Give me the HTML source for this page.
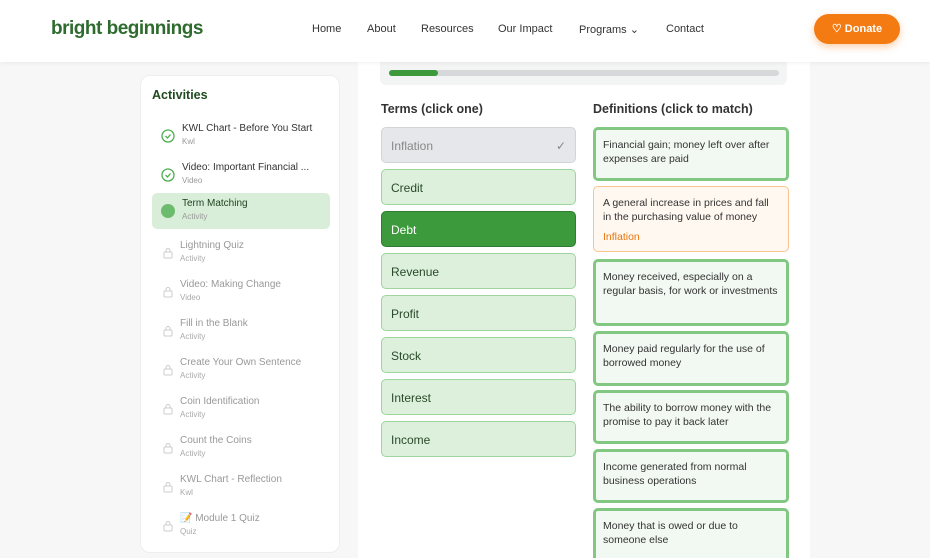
<!DOCTYPE html>
<html style="width:930px;height:558px;overflow:hidden"><head><style>
*{box-sizing:border-box;margin:0;padding:0}
body{width:930px;height:558px;overflow:hidden;background:#f6f7f6;font-family:"Liberation Sans",sans-serif;position:relative}
.hdr{position:absolute;left:0;top:0;width:930px;height:62px;background:#fff;box-shadow:0 1px 4px rgba(0,0,0,.06);z-index:5}
.logo{position:absolute;left:51px;top:18px;font-size:19px;font-weight:bold;color:#2f6b2f;letter-spacing:-.5px}
.nav{position:absolute;top:23px;font-size:11px;color:#333}
.don{position:absolute;left:814px;top:14px;width:86px;height:30px;border-radius:15px;background:#f47a12;color:#fff;font-size:11px;font-weight:bold;line-height:30px;text-align:center;box-shadow:0 3px 8px rgba(244,122,18,.35)}
.side{position:absolute;left:140px;top:75px;width:200px;height:478px;background:#fff;border-radius:10px;border:1px solid #eee}
.side h3{position:absolute;left:11px;top:12px;font-size:12.5px;color:#1f4a1f}
.it{position:absolute;left:11px;width:178px;height:36px;border-radius:5px}
.it .t{position:absolute;left:30px;top:5px;font-size:10px;color:#333;white-space:nowrap}
.it .s{position:absolute;left:30px;top:19px;font-size:8px;color:#999}
.it.l .t{left:28px;color:#999}.it.l .s{left:28px;color:#aaa}
.ic{position:absolute;left:9px;top:11px;width:14px;height:14px}
.main{position:absolute;left:358px;top:62px;width:452px;height:496px;background:#fff}
.prog{position:absolute;left:380px;top:55px;width:407px;height:30px;background:#f3f4f4;border-radius:6px;z-index:1}
.bar{position:absolute;left:9px;top:15px;width:390px;height:6px;border-radius:3px;background:#d6d8da}
.bar i{position:absolute;left:0;top:0;width:49px;height:6px;border-radius:3px;background:#3c9a3c}
.lbl{position:absolute;top:102px;font-size:12.5px;font-weight:bold;color:#333}
.term{position:absolute;left:381px;width:195px;height:36px;border-radius:5px;background:#dcf0dc;border:1.5px solid #9fd49f;font-size:12px;color:#2a4a2a;padding:11px 9px}
.def{position:absolute;left:593px;width:196px;border-radius:5px;background:#f2f9f2;border:3px solid #82c882;font-size:10.5px;line-height:14px;color:#333;padding:8px 7px}
</style></head><body>
<div class="hdr">
<div class="logo">bright beginnings</div>
<div class="nav" style="left:312px">Home</div>
<div class="nav" style="left:367px">About</div>
<div class="nav" style="left:421px">Resources</div>
<div class="nav" style="left:498px">Our Impact</div>
<div class="nav" style="left:579px">Programs ⌄</div>
<div class="nav" style="left:666px">Contact</div>
<div class="don">♡ Donate</div>
</div>
<div class="side"><h3>Activities</h3>
<div class="it" style="top:42px"><svg class="ic" viewBox="0 0 14 14"><circle cx="7" cy="7" r="6" fill="none" stroke="#4caf50" stroke-width="1.3"/><path d="M4.5 7l2 2 3-3.5" fill="none" stroke="#4caf50" stroke-width="1.3"/></svg><div class="t">KWL Chart - Before You Start</div><div class="s">Kwl</div></div>
<div class="it" style="top:81px"><svg class="ic" viewBox="0 0 14 14"><circle cx="7" cy="7" r="6" fill="none" stroke="#4caf50" stroke-width="1.3"/><path d="M4.5 7l2 2 3-3.5" fill="none" stroke="#4caf50" stroke-width="1.3"/></svg><div class="t">Video: Important Financial ...</div><div class="s">Video</div></div>
<div class="it" style="top:117px;background:#d8eed8"><svg class="ic" viewBox="0 0 14 14"><circle cx="7" cy="7" r="7" fill="#6dbb6d"/></svg><div class="t" style="color:#1f3f1f">Term Matching</div><div class="s">Activity</div></div>
<div class="it l" style="top:159px"><svg class="ic" viewBox="0 0 14 14"><rect x="3" y="6" width="8" height="6" rx="1" fill="none" stroke="#ccc"/><path d="M5 6V4.5a2 2 0 014 0V6" fill="none" stroke="#ccc"/></svg><div class="t">Lightning Quiz</div><div class="s">Activity</div></div>
<div class="it l" style="top:198px"><svg class="ic" viewBox="0 0 14 14"><rect x="3" y="6" width="8" height="6" rx="1" fill="none" stroke="#ccc"/><path d="M5 6V4.5a2 2 0 014 0V6" fill="none" stroke="#ccc"/></svg><div class="t">Video: Making Change</div><div class="s">Video</div></div>
<div class="it l" style="top:237px"><svg class="ic" viewBox="0 0 14 14"><rect x="3" y="6" width="8" height="6" rx="1" fill="none" stroke="#ccc"/><path d="M5 6V4.5a2 2 0 014 0V6" fill="none" stroke="#ccc"/></svg><div class="t">Fill in the Blank</div><div class="s">Activity</div></div>
<div class="it l" style="top:276px"><svg class="ic" viewBox="0 0 14 14"><rect x="3" y="6" width="8" height="6" rx="1" fill="none" stroke="#ccc"/><path d="M5 6V4.5a2 2 0 014 0V6" fill="none" stroke="#ccc"/></svg><div class="t">Create Your Own Sentence</div><div class="s">Activity</div></div>
<div class="it l" style="top:315px"><svg class="ic" viewBox="0 0 14 14"><rect x="3" y="6" width="8" height="6" rx="1" fill="none" stroke="#ccc"/><path d="M5 6V4.5a2 2 0 014 0V6" fill="none" stroke="#ccc"/></svg><div class="t">Coin Identification</div><div class="s">Activity</div></div>
<div class="it l" style="top:354px"><svg class="ic" viewBox="0 0 14 14"><rect x="3" y="6" width="8" height="6" rx="1" fill="none" stroke="#ccc"/><path d="M5 6V4.5a2 2 0 014 0V6" fill="none" stroke="#ccc"/></svg><div class="t">Count the Coins</div><div class="s">Activity</div></div>
<div class="it l" style="top:393px"><svg class="ic" viewBox="0 0 14 14"><rect x="3" y="6" width="8" height="6" rx="1" fill="none" stroke="#ccc"/><path d="M5 6V4.5a2 2 0 014 0V6" fill="none" stroke="#ccc"/></svg><div class="t">KWL Chart - Reflection</div><div class="s">Kwl</div></div>
<div class="it l" style="top:432px"><svg class="ic" viewBox="0 0 14 14"><rect x="3" y="6" width="8" height="6" rx="1" fill="none" stroke="#ccc"/><path d="M5 6V4.5a2 2 0 014 0V6" fill="none" stroke="#ccc"/></svg><div class="t">📝 Module 1 Quiz</div><div class="s">Quiz</div></div>
</div>
<div class="main"></div>
<div class="prog"><div class="bar"><i></i></div></div>
<div class="lbl" style="left:381px">Terms (click one)</div>
<div class="lbl" style="left:593px">Definitions (click to match)</div>
<div class="term" style="top:127px;background:#e5e7ea;border-color:#d2d5d8;color:#888">Inflation<span style="position:absolute;right:9px;color:#888">✓</span></div>
<div class="term" style="top:169px">Credit</div>
<div class="term" style="top:211px;background:#3c9a3c;border-color:#2e7d32;color:#fff">Debt</div>
<div class="term" style="top:253px">Revenue</div>
<div class="term" style="top:295px">Profit</div>
<div class="term" style="top:337px">Stock</div>
<div class="term" style="top:379px">Interest</div>
<div class="term" style="top:421px">Income</div>
<div class="def" style="top:127px;height:54px">Financial gain; money left over after expenses are paid</div>
<div class="def" style="top:186px;height:66px;background:#fff8f0;border:1.5px solid #f8c48c;padding:9px 9px">A general increase in prices and fall in the purchasing value of money<div style="color:#e8740c;margin-top:6px">Inflation</div></div>
<div class="def" style="top:259px;height:67px">Money received, especially on a regular basis, for work or investments</div>
<div class="def" style="top:331px;height:55px">Money paid regularly for the use of borrowed money</div>
<div class="def" style="top:390px;height:54px">The ability to borrow money with the promise to pay it back later</div>
<div class="def" style="top:449px;height:54px">Income generated from normal business operations</div>
<div class="def" style="top:508px;height:50px;border-bottom:none;border-radius:5px 5px 0 0">Money that is owed or due to someone else</div>
</body></html>
